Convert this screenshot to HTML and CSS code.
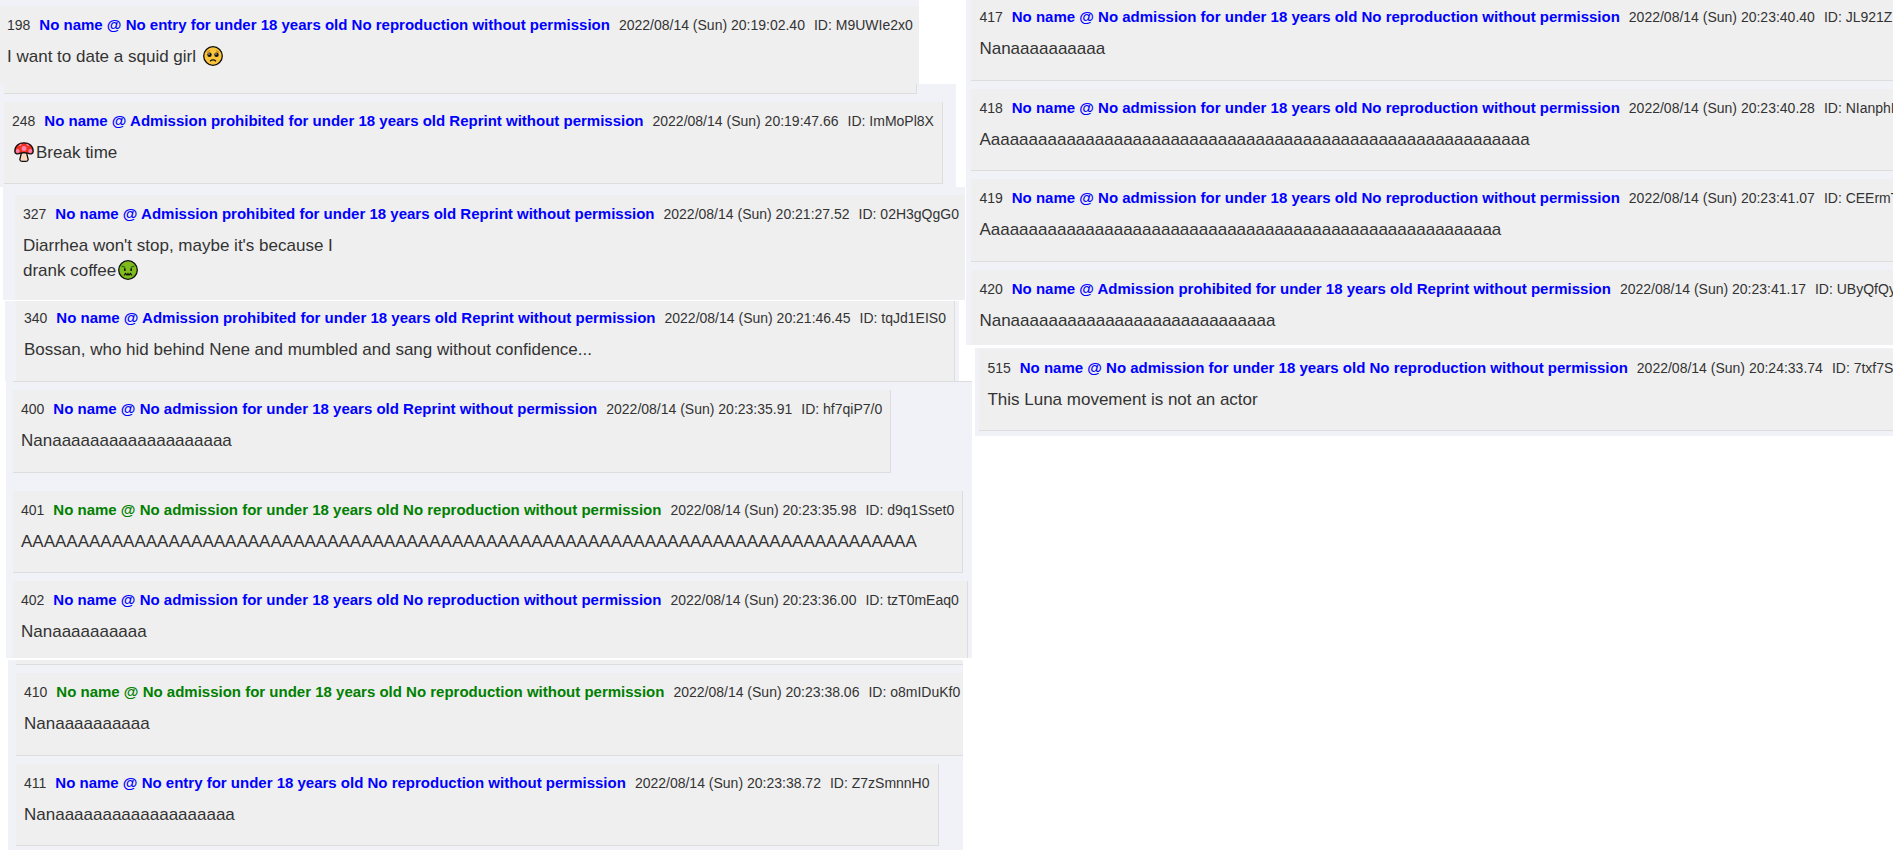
FILE: index.html
```
<!DOCTYPE html>
<html lang="en">
<head>
    <meta charset="UTF-8">
    <meta name="viewport" content="width=device-width, initial-scale=1.0">
    <title>Thread</title>
    <link rel="stylesheet" href="styles.css">
</head>
<body>
    <main class="board">
        <div class="column">
            <section class="strip strip-first">
                <article class="post open-right no-line">
                    <div class="meta"><span>198</span><b class="name">No name @ No entry for under 18 years old No reproduction without permission</b><span>2022/08/14 (Sun) 20:19:02.40</span><span>ID: M9UWIe2x0</span></div>
                    <p class="message">I want to date a squid girl <svg class="emoji" viewBox="0 0 20 20" role="img" aria-label="pleading face">
                        <circle cx="10" cy="10" r="9.300" fill="#fcc539" stroke="#111" stroke-width="1.300"/>
                        <path d="M3.800 6.200Q5.500 5.800 7 4.400M16.200 6.200Q14.500 5.800 13 4.400" fill="none" stroke="#d08a1c" stroke-width="1.100"/>
                        <circle cx="6.500" cy="8.700" r="2.200" fill="#111"/><circle cx="13.500" cy="8.700" r="2.200" fill="#111"/>
                        <circle cx="6" cy="8" r=".7" fill="#fff"/><circle cx="13" cy="8" r=".7" fill="#fff"/>
                        <path d="M7 15.200Q10 12.600 13 15.200" fill="none" stroke="#111" stroke-width="1.200"/>
                    </svg></p>
                </article>
            </section>

            <section class="strip strip-second">
                <div class="tail tail-narrow"></div>
                <article class="post">
                    <div class="meta"><span>248</span><b class="name">No name @ Admission prohibited for under 18 years old Reprint without permission</b><span>2022/08/14 (Sun) 20:19:47.66</span><span>ID: ImMoPl8X</span></div>
                    <p class="message"><svg class="emoji" viewBox="0 0 20 20" role="img" aria-label="mushroom">
                        <path d="M7.500 10.500L5.800 17.500Q6 19.300 8 19.300H12Q14 19.300 14.200 17.500L12.500 10.500Z" fill="#fcd9bc" stroke="#111" stroke-width="1.300"/>
                        <path d="M.8 9.500C.8 4 5 .8 10 .8S19.200 4 19.200 9.500C19.200 12.300 16 12.200 13.500 11.200Q10 10 6.500 11.200C4 12.200.8 12.300.8 9.500Z" fill="#f2311d" stroke="#111" stroke-width="1.300"/>
                        <circle cx="10" cy="6.500" r="2.500" fill="#fb82b0"/>
                        <circle cx="3.700" cy="9" r="1.900" fill="#fb82b0"/><circle cx="16.300" cy="9" r="1.900" fill="#fb82b0"/>
                        <path d="M5 3.200Q6.500 4 7 1.800M15 3.200Q13.500 4 13 1.800" fill="none" stroke="#fb82b0" stroke-width="1.400"/>
                    </svg>Break time</p>
                </article>
            </section>

            <section class="strip strip-third">
                <article class="post open-right cut">
                    <div class="meta"><span>327</span><b class="name">No name @ Admission prohibited for under 18 years old Reprint without permission</b><span>2022/08/14 (Sun) 20:21:27.52</span><span>ID: 02H3gQgG0</span></div>
                    <p class="message">Diarrhea won't stop, maybe it's because I<br>drank coffee<svg class="emoji" viewBox="0 0 20 20" role="img" aria-label="nauseated face">
                        <circle cx="10" cy="10" r="9.300" fill="#80bd1c" stroke="#111" stroke-width="1.300"/>
                        <path d="M3.500 6.500Q5.500 6 7 7.500M16.500 6.500Q14.500 6 13 7.500" fill="none" stroke="#27701b" stroke-width="1.300"/>
                        <path d="M6.800 8.200V11M13.200 8.200V11" stroke="#111" stroke-width="1.600"/>
                        <path d="M6 15.500L7.500 13.500L9 15L10 13.500L11 15L12.500 13.500L14 15.500" fill="none" stroke="#111" stroke-width="1.200"/>
                    </svg></p>
                </article>
            </section>

            <section class="strip strip-fourth">
                <article class="post cut-top no-line">
                    <div class="meta"><span>340</span><b class="name">No name @ Admission prohibited for under 18 years old Reprint without permission</b><span>2022/08/14 (Sun) 20:21:46.45</span><span>ID: tqJd1EIS0</span></div>
                    <p class="message">Bossan, who hid behind Nene and mumbled and sang without confidence...</p>
                </article>
            </section>

            <section class="strip strip-fifth">
                <div class="tail tail-line"></div>
                <article class="post tall spaced">
                    <div class="meta"><span>400</span><b class="name">No name @ No admission for under 18 years old Reprint without permission</b><span>2022/08/14 (Sun) 20:23:35.91</span><span>ID: hf7qiP7/0</span></div>
                    <p class="message">Nanaaaaaaaaaaaaaaaaaaa</p>
                </article>
                <article class="post">
                    <div class="meta"><span>401</span><b class="name green">No name @ No admission for under 18 years old No reproduction without permission</b><span>2022/08/14 (Sun) 20:23:35.98</span><span>ID: d9q1Sset0</span></div>
                    <p class="message">AAAAAAAAAAAAAAAAAAAAAAAAAAAAAAAAAAAAAAAAAAAAAAAAAAAAAAAAAAAAAAAAAAAAAAAAAAAAAAA</p>
                </article>
                <article class="post short no-line">
                    <div class="meta"><span>402</span><b class="name">No name @ No admission for under 18 years old No reproduction without permission</b><span>2022/08/14 (Sun) 20:23:36.00</span><span>ID: tzT0mEaq0</span></div>
                    <p class="message">Nanaaaaaaaaaa</p>
                </article>
            </section>

            <section class="strip strip-sixth">
                <div class="tail"></div>
                <article class="post open-right tall">
                    <div class="meta"><span>410</span><b class="name green">No name @ No admission for under 18 years old No reproduction without permission</b><span>2022/08/14 (Sun) 20:23:38.06</span><span>ID: o8mIDuKf0</span></div>
                    <p class="message">Nanaaaaaaaaaa</p>
                </article>
                <article class="post">
                    <div class="meta"><span>411</span><b class="name">No name @ No entry for under 18 years old No reproduction without permission</b><span>2022/08/14 (Sun) 20:23:38.72</span><span>ID: Z7zSmnnH0</span></div>
                    <p class="message">Nanaaaaaaaaaaaaaaaaaaa</p>
                </article>
            </section>
        </div>

        <div class="column column-right">
            <section class="strip strip-wide">
                <article class="post open-right cut-top">
                    <div class="meta"><span>417</span><b class="name">No name @ No admission for under 18 years old No reproduction without permission</b><span>2022/08/14 (Sun) 20:23:40.40</span><span>ID: JL921Z</span></div>
                    <p class="message">Nanaaaaaaaaaa</p>
                </article>
                <article class="post open-right">
                    <div class="meta"><span>418</span><b class="name">No name @ No admission for under 18 years old No reproduction without permission</b><span>2022/08/14 (Sun) 20:23:40.28</span><span>ID: NIanphI</span></div>
                    <p class="message">Aaaaaaaaaaaaaaaaaaaaaaaaaaaaaaaaaaaaaaaaaaaaaaaaaaaaaaaaaa</p>
                </article>
                <article class="post open-right tall">
                    <div class="meta"><span>419</span><b class="name">No name @ No admission for under 18 years old No reproduction without permission</b><span>2022/08/14 (Sun) 20:23:41.07</span><span>ID: CEErmT</span></div>
                    <p class="message">Aaaaaaaaaaaaaaaaaaaaaaaaaaaaaaaaaaaaaaaaaaaaaaaaaaaaaaa</p>
                </article>
                <article class="post open-right short no-line">
                    <div class="meta"><span>420</span><b class="name">No name @ Admission prohibited for under 18 years old Reprint without permission</b><span>2022/08/14 (Sun) 20:23:41.17</span><span>ID: UByQfQy</span></div>
                    <p class="message">Nanaaaaaaaaaaaaaaaaaaaaaaaaaaaa</p>
                </article>
            </section>

            <section class="strip strip-last">
                <article class="post open-right">
                    <div class="meta"><span>515</span><b class="name">No name @ No admission for under 18 years old No reproduction without permission</b><span>2022/08/14 (Sun) 20:24:33.74</span><span>ID: 7txf7S</span></div>
                    <p class="message">This Luna movement is not an actor</p>
                </article>
            </section>
        </div>
    </main>
</body>
</html>
```
FILE: styles.css
```
* {
    box-sizing: border-box;
}
body {
    margin: 0;
    background-color: #fff;
    color: #333;
    font-family: "Liberation Sans", Arial, sans-serif;
}
.board {
    display: flex;
    align-items: flex-start;
}
.column {
    flex: 0 0 51%;
    min-width: 0;
}
.column-right {
    flex: 1;
    overflow: hidden;
}
.strip {
    display: flex;
    flex-direction: column;
    align-items: flex-start;
    gap: 8px;
    width: fit-content;
    background-color: #f1f2f7;
}

/* posts */
.post {
    padding: 8px 8px 18px;
    background-color: #efefef;
    border-right: 1px solid #ddd;
    border-bottom: 1px solid #ddd;
    white-space: nowrap;
}
.meta {
    display: flex;
    gap: 9px;
    font-size: 14px;
    line-height: 22px;
}
.name {
    color: blue;
    font-size: 15px;
}
.green {
    color: green;
}
.message {
    margin: 8px 0 0;
    font-size: 17px;
    line-height: 25px;
}
.emoji {
    width: 20px;
    height: 20px;
    margin: 0 2px;
    vertical-align: -4px;
}

/* posts that run into the edge of their strip */
.open-right {
    align-self: stretch;
    padding-right: 6px;
    border-right: none;
}
.cut {
    padding-bottom: 17px;
    border-bottom: none;
}
.cut-top {
    padding-top: 6px;
    padding-bottom: 19px;
}
.short {
    padding-bottom: 14px;
}
.tall {
    padding-bottom: 19px;
}
.no-line {
    border-bottom: none;
}
.spaced {
    margin-bottom: 10px;
}
.tail {
    align-self: stretch;
    height: 5px;
    background-color: #efefef;
    border-bottom: 1px solid #ddd;
}
.tail-narrow {
    height: 10px;
    margin-right: 26px;
    border-right: 1px solid #ddd;
}
.tail-line {
    height: 1px;
    margin-right: -4px;
}

/* strips */
.strip-first {
    padding-top: 6px;
}
.strip-first .post {
    padding-left: 7px;
    padding-bottom: 15px;
}
.strip-second {
    padding: 0 13px 3px 4px;
}
.strip-third {
    margin-left: 3px;
    padding: 8px 0 0 12px;
}
.strip-fourth {
    margin: 1px 0 0 5px;
    padding: 0 4px 0 11px;
}
.strip-fifth {
    margin-left: 6px;
    padding: 0 4px 0 7px;
}
.strip-sixth {
    margin: 2px 0 0 8px;
    padding: 0 0 4px 8px;
}
.strip-sixth .open-right {
    padding-right: 3px;
}
.strip-wide {
    width: auto;
    margin-left: 1px;
    padding-left: 5px;
}
.strip-wide .short {
    padding-bottom: 12px;
}
.strip-last {
    width: auto;
    margin: 3px 0 0 10px;
    padding: 1px 0 5px 4px;
}
```
